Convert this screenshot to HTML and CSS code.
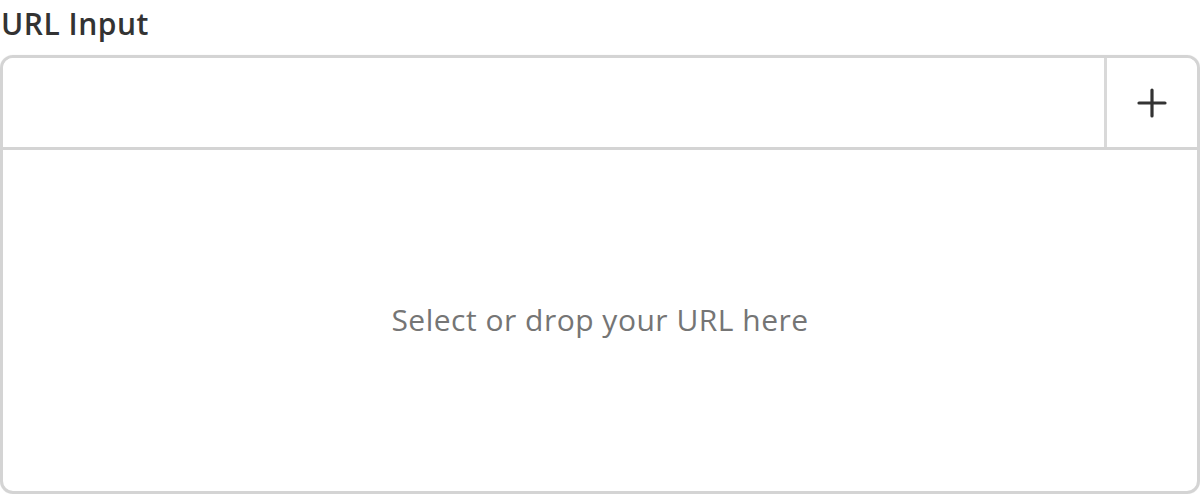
FILE: index.html
```html
<!DOCTYPE html>
<html lang="en">
<head>
<meta charset="utf-8">
<title>URL Input</title>
<link rel="stylesheet" href="styles.css">
</head>
<body>
<div class="field">
  <label class="title" for="url">URL Input</label>
  <div class="box">
    <div class="row">
      <input id="url" class="url" type="text">
      <button class="add" type="button" aria-label="Add">
        <svg width="30" height="30" viewBox="0 0 30 30"><path d="M15 2v26M2 15h26" stroke="#333" stroke-width="3.2" stroke-linecap="round" fill="none"/></svg>
      </button>
    </div>
    <div class="drop">Select or drop your URL here</div>
  </div>
</div>
</body>
</html>
```

FILE: styles.css
```css
html, body {
  margin: 0;
  padding: 0;
  background: #fff;
}
body {
  font-family: "Open Sans", "Noto Sans", sans-serif;
}
.field {
  display: flex;
  flex-direction: column;
  height: 494px;
  box-sizing: border-box;
  padding-top: 4px;
}
.title {
  font-size: 30px;
  font-weight: 600;
  letter-spacing: 0.5px;
  line-height: 40px;
  color: #333;
  padding-left: 1px;
  margin-bottom: 11px;
}
.box {
  flex: 1;
  display: flex;
  flex-direction: column;
  border: 3px solid #d4d4d4;
  border-radius: 13px;
  box-shadow: 0 0 1px rgba(0,0,0,0.12);
  overflow: hidden;
}
.row {
  display: flex;
  height: 89px;
  border-bottom: 3px solid #d4d4d4;
}
.url {
  flex: 1;
  border: 0;
  outline: none;
  font: inherit;
  font-size: 24px;
  padding: 0 16px;
  background: #fff;
}
.add {
  width: 93px;
  border: 0;
  border-left: 3px solid #d9d9d9;
  background: #fff;
  display: flex;
  align-items: center;
  justify-content: center;
  padding: 0;
  cursor: pointer;
}
.drop {
  flex: 1;
  display: flex;
  align-items: center;
  justify-content: center;
  font-size: 30px;
  letter-spacing: 0.5px;
  color: #757575;
  padding-bottom: 2px;
}
```
